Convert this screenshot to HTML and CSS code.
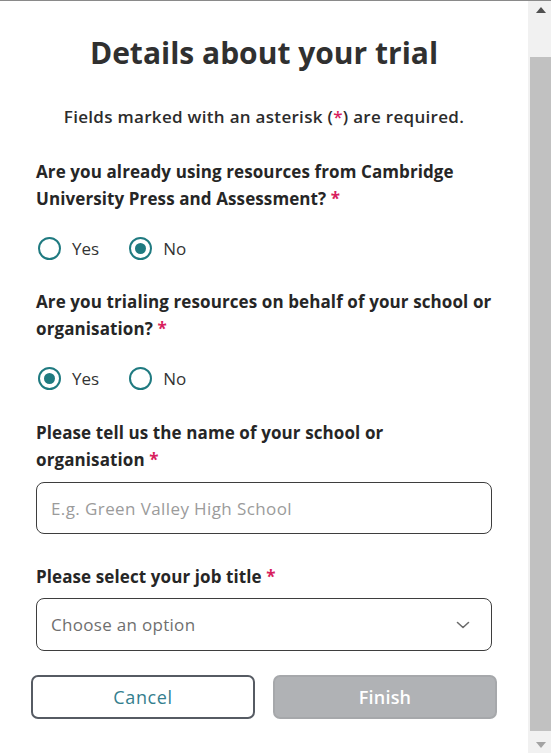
FILE: index.html
```html
<!DOCTYPE html>
<html lang="en">
<head>
<meta charset="utf-8">
<title>Details about your trial</title>
<link rel="stylesheet" href="styles.css">
</head>
<body>
<div class="window">
  <main class="page">
    <h1 class="title">Details about your trial</h1>
    <p class="note">Fields marked with an asterisk (<span class="req">*</span>) are required.</p>

    <form class="form">
      <div class="group" role="radiogroup" aria-labelledby="q1">
        <div class="label" id="q1">Are you already using resources from Cambridge<br>University Press and Assessment? <span class="req">*</span></div>
        <div class="radios">
          <label class="option"><input type="radio" name="using" class="radio"><span>Yes</span></label>
          <label class="option"><input type="radio" name="using" class="radio" checked><span>No</span></label>
        </div>
      </div>

      <div class="group" role="radiogroup" aria-labelledby="q2">
        <div class="label" id="q2">Are you trialing resources on behalf of your school or<br>organisation? <span class="req">*</span></div>
        <div class="radios">
          <label class="option"><input type="radio" name="behalf" class="radio" checked><span>Yes</span></label>
          <label class="option"><input type="radio" name="behalf" class="radio"><span>No</span></label>
        </div>
      </div>

      <div class="group field">
        <label class="label" for="school">Please tell us the name of your school or<br>organisation <span class="req">*</span></label>
        <input id="school" class="input" type="text" placeholder="E.g. Green Valley High School">
      </div>

      <div class="group field field-select">
        <label class="label" for="job">Please select your job title <span class="req">*</span></label>
        <div class="select" id="job">
          <span class="select-text">Choose an option</span>
          <svg class="chevron" width="14" height="8" viewBox="0 0 14 8" aria-hidden="true"><path d="M1.5 1.5 L7 6.5 L12.5 1.5" fill="none" stroke="#6b6b6b" stroke-width="1.6" stroke-linecap="round" stroke-linejoin="round"/></svg>
        </div>
      </div>

      <div class="actions">
        <button type="button" class="btn btn-cancel">Cancel</button>
        <button type="button" class="btn btn-finish" disabled>Finish</button>
      </div>
    </form>
  </main>

  <div class="scrollbar" aria-hidden="true">
    <div class="sb-btn"><span class="tri-up"></span></div>
    <div class="sb-gap-top"></div>
    <div class="sb-thumb"></div>
    <div class="sb-gap-bottom"></div>
    <div class="sb-btn"><span class="tri-down"></span></div>
  </div>
</div>
</body>
</html>
```

FILE: styles.css
```css
* { box-sizing: border-box; }

html, body {
  margin: 0;
  padding: 0;
  background: #ffffff;
}

body {
  font-family: "Open Sans", "Noto Sans", "Liberation Sans", sans-serif;
  color: #2a2a2a;
  overflow: hidden;
}

.window {
  display: flex;
  height: 753px;
  border-top: 1px solid #8a8a8a;
}

.page {
  flex: 1;
  padding: 32px 36px 0;
  min-width: 0;
}

.title {
  margin: 0;
  font-size: 30px;
  line-height: 40px;
  font-weight: 700;
  text-align: center;
  color: #303030;
}

.note {
  margin: 32px 0 0;
  font-size: 17px;
  line-height: 24px;
  font-weight: 600;
  letter-spacing: 0.3px;
  text-align: center;
  color: #2c2c2c;
}

.req { color: #d81f5e; }

.form {
  display: flex;
  flex-direction: column;
  margin-top: 29px;
}

.group {
  margin: 0 0 29px;
  padding: 0;
  min-width: 0;
}

.group:first-child { margin-bottom: 28px; }

.label {
  display: block;
  margin-right: -12px;
  font-size: 17px;
  line-height: 27px;
  font-weight: 700;
  letter-spacing: 0.1px;
  color: #262626;
}

.radios {
  display: flex;
  gap: 28px;
  margin-top: 24px;
  height: 24px;
  align-items: center;
}

.option {
  display: flex;
  align-items: center;
  gap: 11px;
  font-size: 17px;
  color: #333333;
}

.radio {
  appearance: none;
  -webkit-appearance: none;
  width: 23px;
  height: 23px;
  margin: 0 0 0 2px;
  border: 2px solid #1f7a80;
  border-radius: 50%;
  display: grid;
  place-items: center;
  background: #ffffff;
}

.radio:checked::after {
  content: "";
  width: 11px;
  height: 11px;
  border-radius: 50%;
  background: #1f7a80;
}

.field .label { margin-bottom: 9px; }
.field-select .label { margin-bottom: 8px; }

.input {
  display: block;
  width: 100%;
  height: 52px;
  border: 1px solid #3e3e3e;
  border-radius: 8px;
  padding: 0 14px;
  font-family: inherit;
  font-size: 17px;
  letter-spacing: 0.4px;
  color: #333;
  outline: none;
}

.input::placeholder { color: #9b9b9b; }

.select {
  display: flex;
  align-items: center;
  justify-content: space-between;
  height: 53px;
  border: 1px solid #3e3e3e;
  border-radius: 8px;
  padding: 0 21px 0 14px;
}

.select-text {
  font-size: 17px;
  letter-spacing: 0.3px;
  color: #6f6f6f;
}

.chevron { display: block; }

.actions {
  display: flex;
  gap: 18px;
  margin: -5px -5px 0;
}

.btn {
  flex: 1;
  height: 44px;
  border-radius: 7px;
  font-family: inherit;
  font-size: 18px;
  cursor: pointer;
}

.btn-cancel {
  background: #ffffff;
  border: 2px solid #565b63;
  color: #347e8e;
  font-weight: 400;
  letter-spacing: 0.6px;
}

.btn-finish {
  background: #b0b2b5;
  border: 2px solid #a6a8ab;
  color: #ffffff;
  font-weight: 600;
  letter-spacing: 0.2px;
}

/* scrollbar column */
.scrollbar {
  width: 23px;
  flex: none;
  display: flex;
  flex-direction: column;
  background: #f1f1f1;
}

.sb-btn {
  height: 17px;
  flex: none;
  display: flex;
  align-items: center;
  justify-content: center;
  padding-left: 2px;
}

.tri-up {
  width: 0;
  height: 0;
  border-left: 5.5px solid transparent;
  border-right: 5.5px solid transparent;
  border-bottom: 6px solid #505050;
}

.tri-down {
  width: 0;
  height: 0;
  border-left: 5.5px solid transparent;
  border-right: 5.5px solid transparent;
  border-top: 6px solid #a3a3a3;
}

.sb-gap-top { height: 39px; flex: none; }
.sb-gap-bottom { height: 5px; flex: none; }

.sb-thumb {
  flex: 1;
  margin-left: 2px;
  background: #c1c1c1;
}
```
